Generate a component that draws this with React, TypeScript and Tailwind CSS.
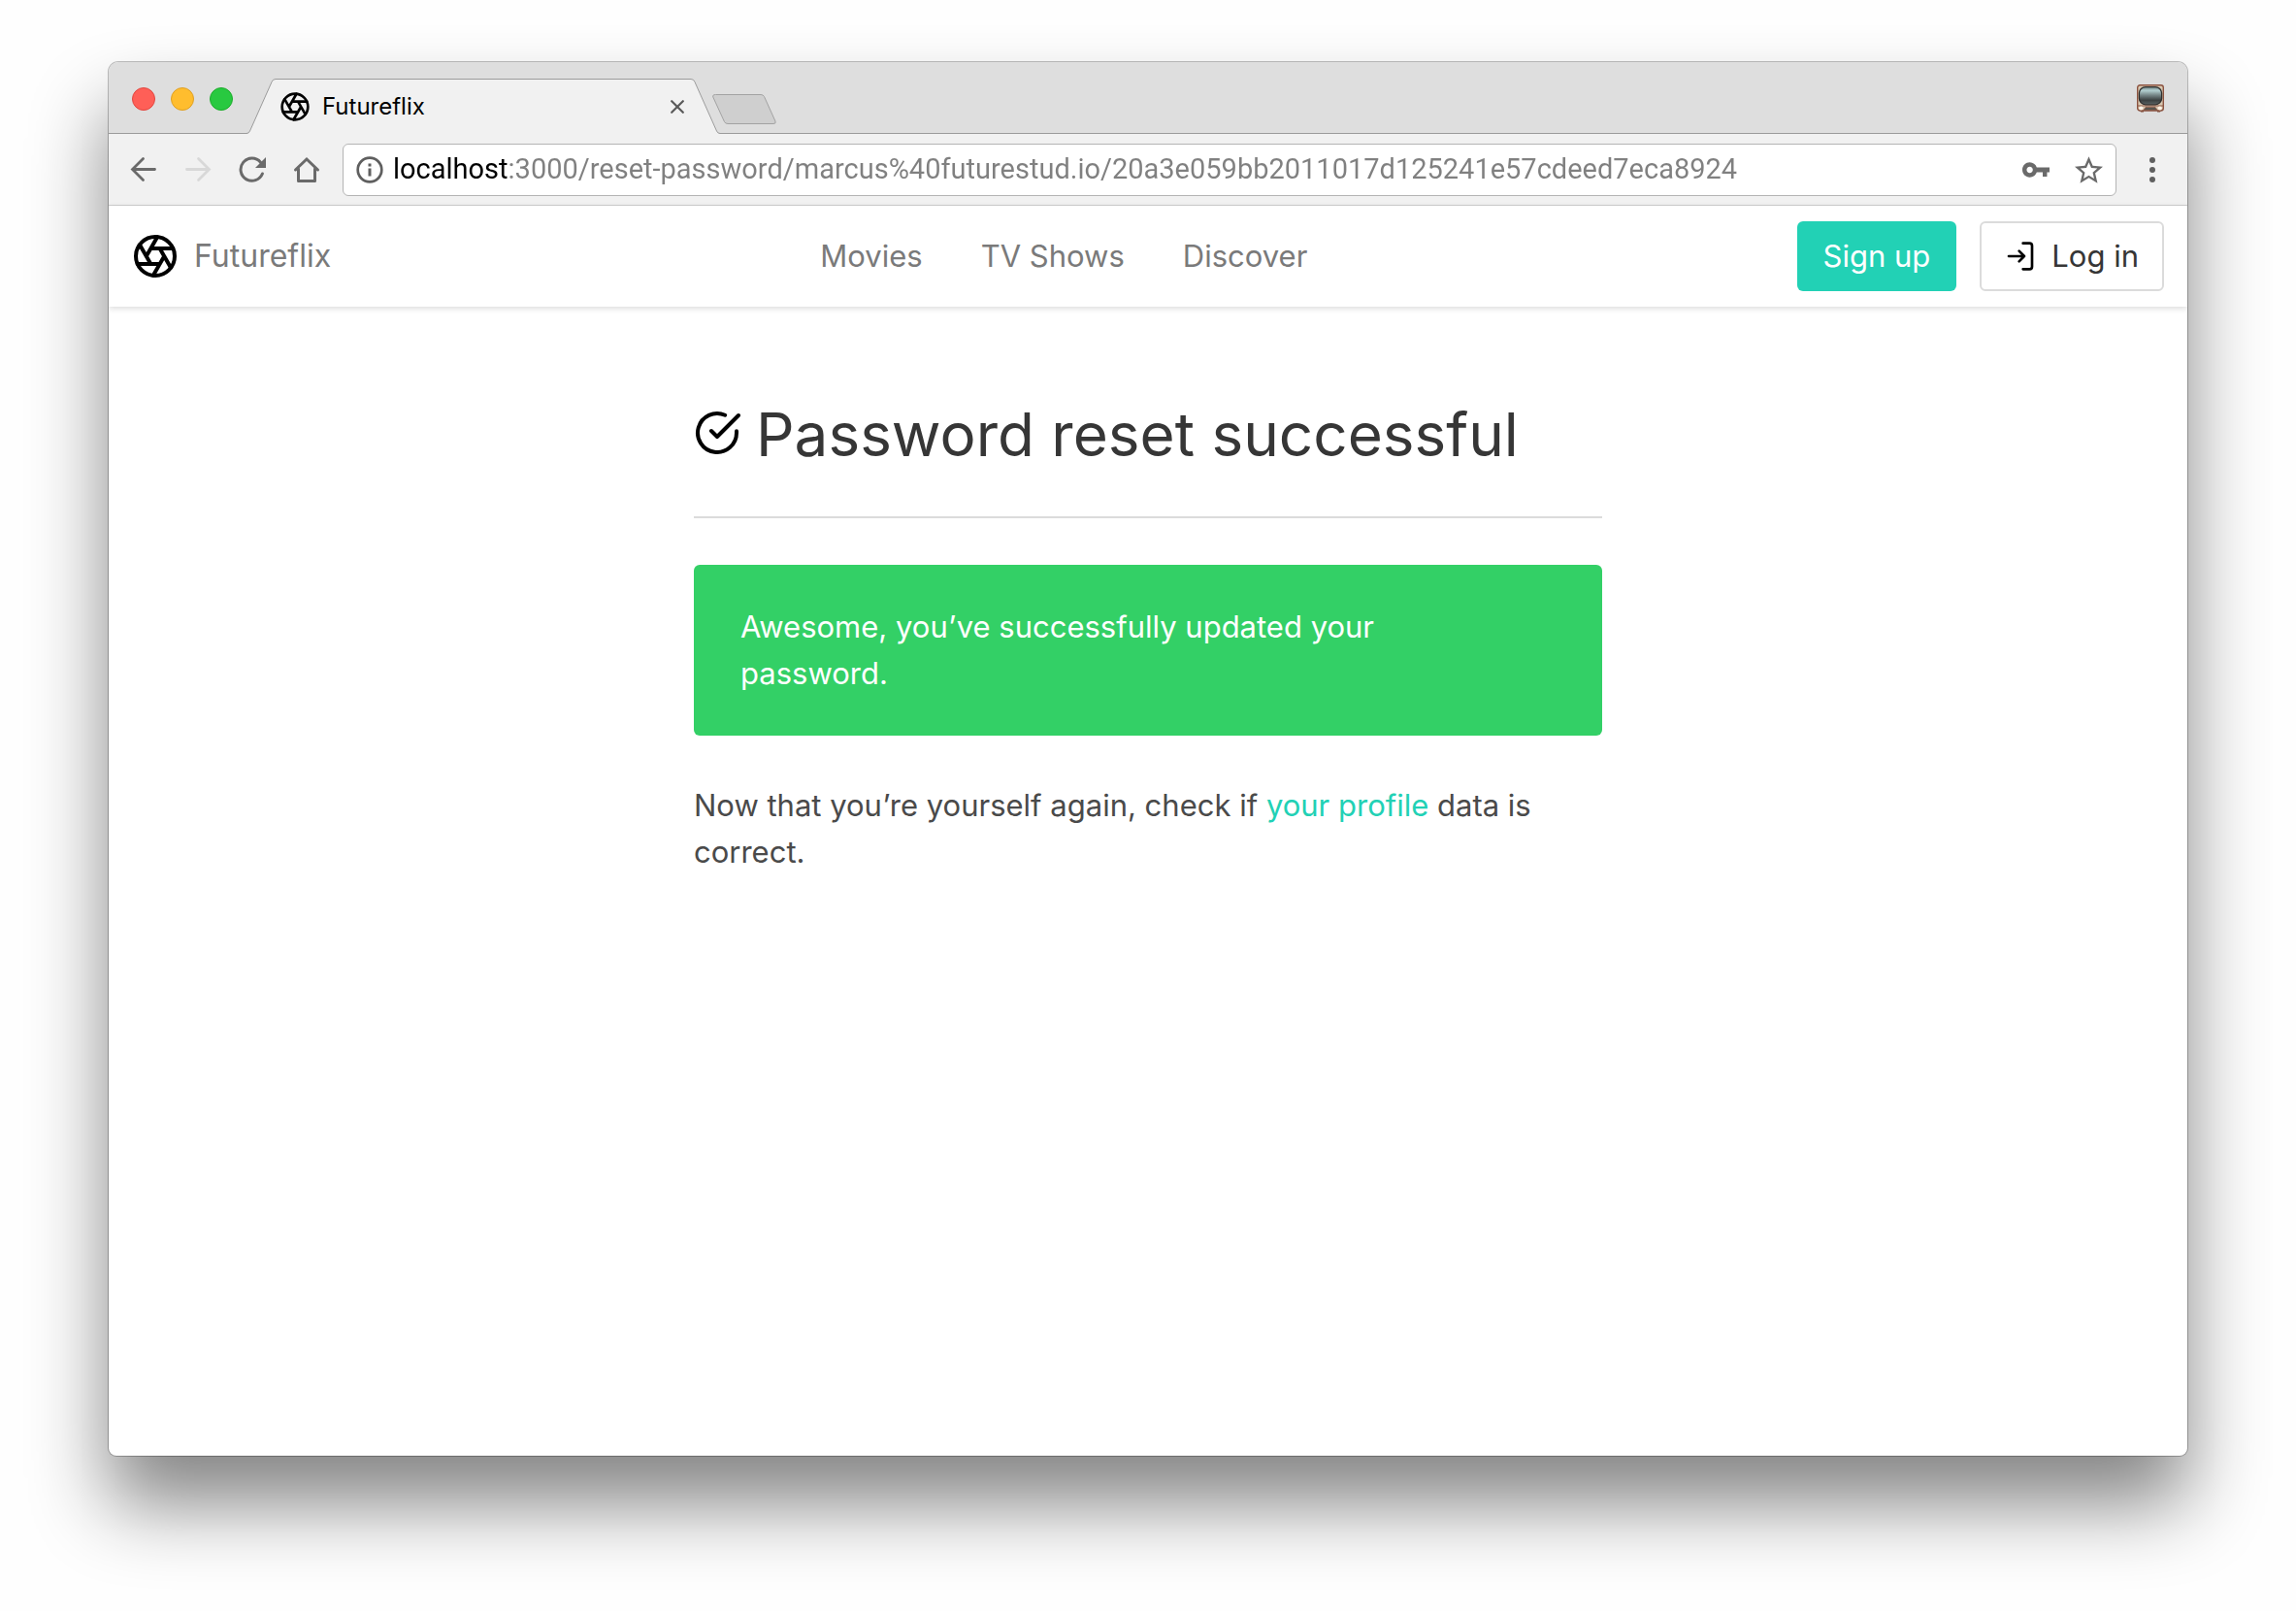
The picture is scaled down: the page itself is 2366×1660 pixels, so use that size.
import React from 'react';

function ApertureIcon({ className }: { className?: string }) {
  return (
    <svg viewBox="0 0 24 24" fill="none" stroke="currentColor" strokeWidth="2" strokeLinecap="round" strokeLinejoin="round" className={className} aria-hidden="true">
      <circle cx="12" cy="12" r="10" />
      <path d="M14.31 8l5.74 9.94M9.69 8h11.48M7.38 12l5.74-9.94M9.69 16L3.95 6.06M14.31 16H2.83M16.62 12l-5.74 9.94" />
    </svg>
  );
}

function TelevisionIcon() {
  return (
    <svg viewBox="0 0 28 29" className="h-[29px] w-7" role="img" aria-label="Television">
      <defs>
        <linearGradient id="screen" x1="0" y1="0" x2="0" y2="1">
          <stop offset="0" stopColor="#6f8587" />
          <stop offset="0.2" stopColor="#b3cfd0" />
          <stop offset="0.45" stopColor="#78898a" />
          <stop offset="0.75" stopColor="#3a4040" />
          <stop offset="1" stopColor="#596363" />
        </linearGradient>
      </defs>
      <path d="M3 26h4v2.5H4zM21 26h4l-1 2.5h-3z" fill="#7b4a38" />
      <rect x="0.7" y="0.7" width="26.6" height="26.3" rx="2.5" fill="#d9c9b2" stroke="#8b5340" strokeWidth="1.4" />
      <path d="M1 22h26" stroke="#8b5340" strokeWidth="1" />
      <rect x="2.4" y="2.6" width="23.2" height="18.2" rx="6.5" fill="url(#screen)" stroke="#30302f" strokeWidth="1.3" />
      <path d="M9 23.4h10l2 3H7z" fill="#57564f" stroke="#8b5340" strokeWidth="0.7" />
      <circle cx="4.3" cy="24.5" r="2" fill="#fbf3e6" />
      <circle cx="23.7" cy="24.5" r="2" fill="#fbf3e6" />
    </svg>
  );
}

function TabStrip() {
  return (
    <div className="flex h-[74px] items-center border-b border-[#9b9b9b] bg-[#dedede] px-6 pt-[2px]">
      <div className="flex gap-4">
        <button aria-label="Close window" className="size-6 rounded-full border border-[#e2463f] bg-[#ff5f57]" />
        <button aria-label="Minimize window" className="size-6 rounded-full border border-[#dfa023] bg-[#ffbd2e]" />
        <button aria-label="Zoom window" className="size-6 rounded-full border border-[#1dad2b] bg-[#28c940]" />
      </div>
      <div className="-mb-px ml-[14px] flex h-[57px] self-end">
        <svg viewBox="0 0 30 57" className="h-full w-[30px]" aria-hidden="true">
          <path d="M0 57V56.5Q2.5 56.5 3.5 54L26 3.5Q27 .5 30 .5V57Z" fill="#f1f1f1" />
          <path d="M0 56.5Q2.5 56.5 3.5 54L26 3.5Q27 .5 30 .5" fill="none" stroke="#9b9b9b" />
        </svg>
        <div className="flex w-[428px] items-center border-t border-[#9b9b9b] bg-[#f1f1f1] pr-[7px] pl-1">
          <ApertureIcon className="size-8 text-black" />
          <span className="ml-3 font-['Inter',sans-serif] text-2xl text-black">Futureflix</span>
          <button aria-label="Close tab" className="ml-auto text-[#5a5a5a]">
            <svg viewBox="0 0 14 14" className="size-[14px]" fill="none" stroke="currentColor" strokeWidth="2.2" strokeLinecap="round">
              <path d="M1.2 1.2l11.6 11.6M12.8 1.2L1.2 12.8" />
            </svg>
          </button>
        </div>
        <svg viewBox="0 0 30 57" className="h-full w-[30px]" aria-hidden="true">
          <path d="M30 57V56.5Q27.500 56.500 26.500 54L4 3.500Q3 .5 0 .5V57Z" fill="#f1f1f1" />
          <path d="M30 56.500Q27.500 56.500 26.500 54L4 3.500Q3 .5 0 .5" fill="none" stroke="#9b9b9b" />
        </svg>
      </div>
      <button aria-label="New tab" className="mb-2 -ml-2 self-end">
        <svg viewBox="0 0 66 32" className="h-8 w-[66px]">
          <path d="M3.500 .5H50Q52.500 .5 53.500 2.500L65 28Q66 30.500 63 30.500H16Q13.500 30.500 12.500 28.500L.8 3Q0 .5 3.500 .5Z" fill="#cfcfcf" stroke="#a2a2a2" />
        </svg>
      </button>
      <div className="ml-auto">
        <TelevisionIcon />
      </div>
    </div>
  );
}

function Toolbar() {
  return (
    <div className="flex h-[74px] items-center border-b border-[#cfcfcf] bg-[#f1f1f1] px-[22px] text-[#6a6a6a]">
      <div className="flex gap-7">
        <button aria-label="Back">
          <svg viewBox="0 0 28 28" className="size-7" fill="none" stroke="currentColor" strokeWidth="2.800" strokeLinecap="round">
            <path d="M13.500 2.500L2.500 13.500L13.500 24.500M3 13.500H25.500" />
          </svg>
        </button>
        <button aria-label="Forward" className="text-[#d8d8d8]">
          <svg viewBox="0 0 28 28" className="size-7" fill="none" stroke="currentColor" strokeWidth="2.800" strokeLinecap="round">
            <path d="M14.500 2.500L25.500 13.500L14.500 24.500M25 13.500H2.500" />
          </svg>
        </button>
        <button aria-label="Reload">
          <svg viewBox="0 0 28 28" className="size-7" fill="none" stroke="currentColor" strokeWidth="3" strokeLinecap="round">
            <path d="M22.500 6.200A11.600 11.600 0 1 0 24.400 18" />
            <path d="M28 1V12H17Z" fill="currentColor" stroke="none" />
          </svg>
        </button>
        <button aria-label="Home">
          <svg viewBox="0 0 28 28" className="size-7" fill="none" stroke="currentColor" strokeWidth="3" strokeLinecap="round">
            <path d="M2.500 14L14 3L25.500 14" />
            <path d="M5.500 13V25.500H22.500V13" strokeLinejoin="round" />
          </svg>
        </button>
      </div>
      <div className="ml-[23px] flex h-[54px] min-w-0 flex-1 items-center rounded-md border border-[#b4b4b4] bg-white px-[13px]">
        <svg viewBox="0 0 28 28" className="size-7 shrink-0 text-[#5f5f5f]" fill="none" stroke="currentColor" strokeWidth="2.700" aria-hidden="true">
          <circle cx="14" cy="14" r="12.300" />
          <path d="M14 12.500V20.500M14 7.500V10.500" strokeWidth="3" />
        </svg>
        <input
          aria-label="Address"
          defaultValue="localhost:3000/reset-password/marcus%40futurestud.io/20a3e059bb2011017d125241e57cdeed7eca8924"
          className="ml-[10px] min-w-0 flex-1 bg-[linear-gradient(90deg,#000_119px,#808080_119px)] bg-clip-text font-['Roboto',sans-serif] text-[29px] text-transparent outline-none"
        />
        <button aria-label="Saved passwords">
          <svg viewBox="1 6 22 12" className="h-4 w-7" fill="currentColor">
            <path d="M12.650 10C11.830 7.670 9.610 6 7 6c-3.310 0-6 2.690-6 6s2.690 6 6 6c2.610 0 4.830-1.670 5.650-4H17.500v3.500h3.500V14h2v-4H12.650zM7 14.500c-1.400 0-2.500-1.100-2.500-2.500s1.100-2.500 2.500-2.500 2.500 1.100 2.500 2.500-1.100 2.500-2.500 2.500z" />
          </svg>
        </button>
        <button aria-label="Bookmark this page" className="ml-[26px]">
          <svg viewBox="2 2 20 19" className="h-7 w-[29px]" fill="currentColor">
            <path d="M22 9.240l-7.190-.62L12 2 9.190 8.630 2 9.240l5.460 4.730L5.820 21 12 17.270 18.180 21l-1.630-7.030L22 9.240zM12 15.400l-3.760 2.270 1-4.280-3.320-2.880 4.380-.38L12 6.100l1.710 4.040 4.380.38-3.320 2.880 1 4.280L12 15.400z" />
          </svg>
        </button>
      </div>
      <button aria-label="Browser menu" className="ml-[23px]">
        <svg viewBox="0 0 28 28" className="size-7" fill="#5f5f5f">
          <circle cx="14" cy="4" r="3" />
          <circle cx="14" cy="14" r="3" />
          <circle cx="14" cy="24" r="3" />
        </svg>
      </button>
    </div>
  );
}

function SiteNav() {
  return (
    <header className="flex h-[104px] items-center justify-between bg-white px-6 text-[31px] leading-[48px] shadow-[0_2px_6px_rgba(10,10,10,0.14)]">
      <a href="#home" className="flex items-center gap-4 text-[32px] text-[#7a7a7a]">
        <ApertureIcon className="size-12 text-black" />
        Futureflix
      </a>
      <nav className="flex gap-[60px] text-[#7a7a7a]">
        <a href="#movies">Movies</a>
        <a href="#tv-shows">TV Shows</a>
        <a href="#discover">Discover</a>
      </nav>
      <div className="flex gap-6">
        <a href="#signup" className="flex h-[72px] items-center rounded-md bg-[#22d1b5] px-[27px] text-white">
          Sign up
        </a>
        <a href="#login" className="flex h-[72px] items-center gap-4 rounded-md border-2 border-[#dbdbdb] px-6 text-[#363636]">
          <svg viewBox="0 0 24 24" className="size-8 text-black" fill="none" stroke="currentColor" strokeWidth="2" strokeLinecap="round" strokeLinejoin="round" aria-hidden="true">
            <path d="M14 22h5a2 2 0 0 0 2-2V4a2 2 0 0 0-2-2h-5" />
            <path d="M11 16l4-4-4-4M3 12h12" />
          </svg>
          Log in
        </a>
      </div>
    </header>
  );
}

export default function App() {
  return (
    <div className="flex min-h-screen flex-col bg-[#fefefe] px-28 pt-16 pb-40">
      <div className="flex flex-1 flex-col overflow-hidden rounded-t-[10px] rounded-b-lg bg-white font-['Inter',sans-serif] shadow-[0_0_0_1px_rgba(0,0,0,0.25),0_50px_80px_rgba(0,0,0,0.48)]">
        <TabStrip />
        <Toolbar />
        <SiteNav />
        <main className="mx-auto w-full max-w-[936px] pt-24 text-[31px] leading-[48px] text-[#4a4a4a]">
          <h1 className="flex items-center gap-4 text-[62px] leading-[72px] text-[#363636]">
            <svg viewBox="0 0 24 24" className="mb-1 size-12 text-black" fill="none" stroke="currentColor" strokeWidth="2" strokeLinecap="round" strokeLinejoin="round" aria-hidden="true">
              <path d="M22 11.070V12a10 10 0 1 1-5.930-9.140" />
              <path d="M23 3L12 14l-3-3" />
            </svg>
            Password reset successful
          </h1>
          <hr className="my-12 border-t-2 border-[#dbdbdb]" />
          <div role="status" className="rounded-md bg-[#33d066] py-10 pr-24 pl-12 text-white">
            Awesome, you’ve successfully updated your password.
          </div>
          <p className="mt-12">
            Now that you’re yourself again, check if{' '}
            <a href="#profile" className="text-[#22d1b5]">
              your profile
            </a>{' '}
            data is correct.
          </p>
        </main>
      </div>
    </div>
  );
}
